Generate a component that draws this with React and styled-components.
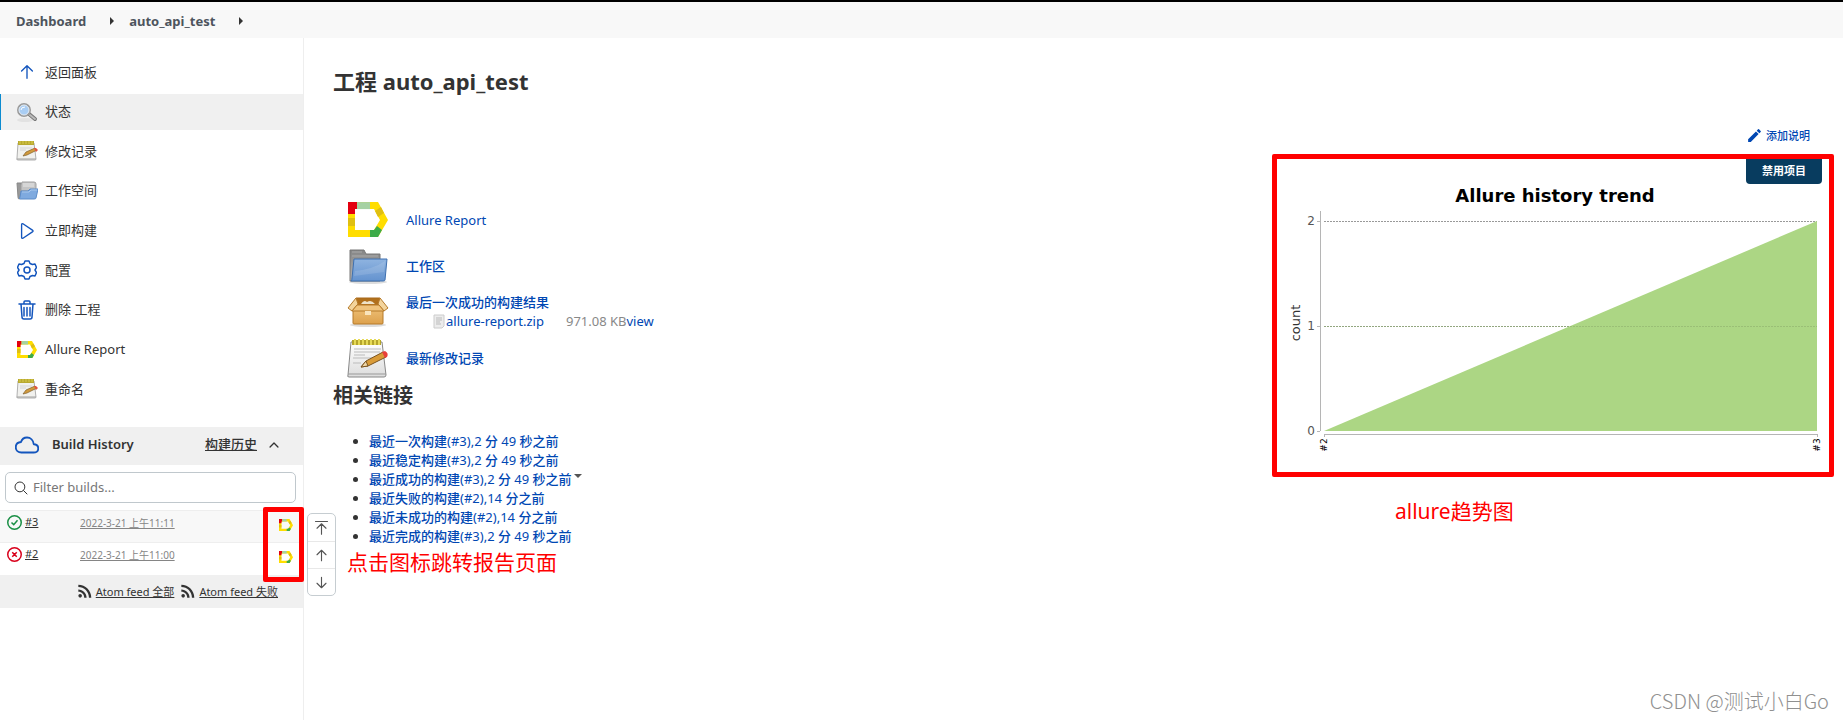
import styled, { createGlobalStyle } from "styled-components"
import {
    IoCloudOutline,
    IoSearchOutline,
    IoChevronUp,
} from "react-icons/io5"
import { MdEdit, MdRssFeed } from "react-icons/md"

const GlobalStyle = createGlobalStyle`
    * {
        box-sizing: border-box;
    }
    body {
        margin: 0;
        background: #fff;
        color: #333;
        font-family: "Noto Sans", "Noto Sans CJK SC", sans-serif;
        font-size: 13px;
        line-height: 19px;
    }
    a {
        color: inherit;
        text-decoration: none;
    }
`

const Page = styled.div`
    position: relative;
    min-height: 100vh;
    display: flex;
    flex-direction: column;
    border-top: 2px solid #000;
`

const Breadcrumbs = styled.nav`
    height: 36px;
    padding: 2px 0 0 16px;
    display: flex;
    align-items: center;
    background: #f8f8f8;
    color: #4d545d;
    font-weight: 700;
`

const Arrow = styled.span`
    margin: 0 15px 0 24px;
    border-left: 4px solid #333;
    border-top: 4px solid transparent;
    border-bottom: 4px solid transparent;
`

const Body = styled.div`
    flex: 1;
    display: flex;
`

const Sidebar = styled.aside`
    position: relative;
    width: 304px;
    flex-shrink: 0;
    border-right: 1px solid #eee;
`

const Tasks = styled.nav`
    min-height: 353px;
    margin: 16px 0 20px;
    display: flex;
    flex-direction: column;
    justify-content: space-between;
`

const Task = styled.a`
    height: 36px;
    padding-left: 14px;
    display: flex;
    align-items: center;
    gap: 6px;
    border-left: 1px solid ${props => props.$active ? "#0b8bd0" : "transparent"};
    background: ${props => props.$active ? "#f0f0f0" : "none"};
`

const TaskIcon = styled.span`
    width: 24px;
    display: flex;
    justify-content: center;
    color: #1355bd;
`

const HistoryHead = styled.div`
    height: 38px;
    padding: 0 22px 3px 15px;
    display: flex;
    align-items: center;
    background: #f0f0f0;
    color: #333;
`

const CloudIcon = styled(IoCloudOutline)`
    color: #1355bd;
    path{
        stroke-width: 40px;
    }
`

const HistoryTitle = styled.h2`
    flex: 1;
    margin: 0 0 0 13px;
    font-size: 13px;
    font-weight: 600;
    line-height: 19px;
`

const Trend = styled.a`
    margin-right: 10px;
    font-weight: 500;
    text-decoration: underline;
`

const Filter = styled.label`
    height: 31px;
    margin: 7px 7px 7px 5px;
    padding: 0 7px;
    display: flex;
    align-items: center;
    gap: 4px;
    border: 1px solid #c0c8cd;
    border-radius: 5px;
`

const FilterInput = styled.input`
    flex: 1;
    min-width: 0;
    padding: 0;
    border: 0;
    outline: 0;
    background: none;
    font: inherit;
    &::placeholder{
        color: #777;
    }
`

const Builds = styled.table`
    width: 100%;
    border-collapse: collapse;
    font-size: 11px;
    line-height: 16px;
`

const BuildRow = styled.tr`
    height: 32px;
    background: ${props => props.$shaded ? "#f8f8f8" : "#fff"};
    border-top: 1px solid #eee;
`

const BuildCell = styled.td`
    width: ${props => props.$width};
    padding: ${props => props.$pad};
    vertical-align: top;
`

const BuildStatus = styled.span`
    display: flex;
    align-items: center;
    gap: 3px;
    color: #333;
    svg{
        color: ${props => props.$ok ? "#1a8f45" : "#d9001b"};
    }
`

const UnderLink = styled.a`
    color: #333;
    text-decoration: underline;
`

const BuildDate = styled(UnderLink)`
    color: #858585;
    font-size: 10px;
`

const Feeds = styled.div`
    height: 33px;
    padding-right: 25px;
    display: flex;
    align-items: center;
    justify-content: flex-end;
    gap: 4px;
    background: #f0f0f0;
    font-size: 11px;
`

const Feed = styled.span`
    display: flex;
    align-items: center;
    gap: 1px;
`

const IconMark = styled.div`
    position: absolute;
    top: 469px;
    right: -1px;
    width: 41px;
    height: 75px;
    border: 5px solid #f00;
    border-radius: 2px;
`

const Pager = styled.div`
    position: absolute;
    top: 475px;
    left: 307px;
    width: 29px;
    border: 1px solid #c6cdd1;
    border-radius: 5px;
    background: #fff;
`

const PagerButton = styled.button`
    width: 100%;
    height: 27px;
    padding: 0;
    display: flex;
    align-items: center;
    justify-content: center;
    border: 0;
    border-top: ${props => props.$first ? "0" : "1px solid #e8e8e8"};
    background: none;
    color: #555;
`

const Main = styled.main`
    flex: 1;
    padding: 28px 9px 0 29px;
    display: grid;
    grid-template-columns: 1fr 562px;
    grid-template-rows: auto 1fr;
`

const Title = styled.h1`
    grid-column: 1 / -1;
    margin: 0;
    font-size: 22px;
    line-height: 30px;
`

const Summary = styled.section`
    padding-top: 101px;
`

const SummaryRow = styled.div`
    height: 46px;
    padding-left: 14px;
    display: grid;
    grid-template-columns: 42px 1fr;
    gap: 17px;
    align-items: center;
`

const SummaryIcon = styled.span`
    display: flex;
    justify-content: center;
`

const Link = styled.a`
    color: #0047b3;
    font-weight: ${props => props.$cjk ? 500 : 400};
`

const Digits = styled.span`
    font-weight: 400;
`

const Artifact = styled.div`
    padding-left: 26px;
    display: flex;
    align-items: center;
`

const FileSize = styled.span`
    margin-left: 22px;
    color: #888;
`

const Heading = styled.h2`
    margin: 0 0 21px;
    font-size: 20px;
    line-height: 30px;
`

const Permalinks = styled.ul`
    margin: 0;
    padding-left: 36px;
`

const Caret = styled.span`
    display: inline-block;
    margin-left: 2px;
    vertical-align: 6px;
    border-top: 4px solid #555;
    border-left: 4px solid transparent;
    border-right: 4px solid transparent;
`

const Note = styled.p`
    margin: 0;
    padding-left: ${props => props.$indent};
    color: #f00;
    font-size: 21px;
    line-height: 32px;
`

const Side = styled.aside`
    padding-top: 30px;
`

const AddNote = styled.a`
    height: 18px;
    margin-bottom: 10px;
    padding-right: 24px;
    display: flex;
    align-items: center;
    justify-content: flex-end;
    gap: 3px;
    color: #0047b3;
    font-size: 11px;
    font-weight: 500;
`

const ChartFrame = styled.div`
    height: 323px;
    margin-bottom: 18px;
    padding-right: 7px;
    border: 5px solid #f00;
    border-radius: 2px;
`

const DisableButton = styled.button`
    width: 76px;
    height: 25px;
    margin-left: auto;
    padding: 0 0 4px;
    display: block;
    border: 0;
    border-radius: 0 0 4px 4px;
    background: #083c5f;
    color: #fff;
    font-family: inherit;
    font-size: 11px;
    font-weight: 700;
`

const Chart = styled.svg`
    display: block;
    font-family: "DejaVu Sans", sans-serif;
`

const Watermark = styled.div`
    position: absolute;
    right: 14px;
    bottom: 5px;
    color: #909090;
    font-family: "Noto Sans CJK SC", sans-serif;
    font-size: 20px;
    font-weight: 300;
    line-height: 28px;
`

const AllureLogo = ({ size }) => (
    <svg width={size} height={size * 0.88} viewBox="0 0 40 35">
        <path fill="#ffdd00" d="M0 0H30L40 18L30 35H0ZM7 7V28H26L32 18L26 7Z" fillRule="evenodd" />
        <path fill="#e3000f" d="M0 0H9V7H7V12H0Z" />
        <path fill="#a5d1a3" d="M9 0H22V7H9Z" />
        <path fill="#dfbf12" d="M0 16H7V24H0ZM33 5L36 11L30 15L27 9Z" />
        <path fill="#3dab49" d="M34 28L30 35H22V28H26L29 24Z" />
    </svg>
)

const FolderIcon = () => (
    <svg width="40" height="35" viewBox="0 0 40 35">
        <defs>
            <linearGradient id="folderBlue" x1="0" y1="0" x2="0" y2="1">
                <stop offset="0" stopColor="#8fb4e0" />
                <stop offset="1" stopColor="#6493cf" />
            </linearGradient>
            <linearGradient id="folderGrey" x1="0" y1="0" x2="0" y2="1">
                <stop offset="0" stopColor="#858585" />
                <stop offset="1" stopColor="#b5b5b5" />
            </linearGradient>
        </defs>
        <ellipse cx="20" cy="33" rx="19" ry="2" fill="#ddd" />
        <path d="M2 1H16L18 5H32V32H2Z" fill="url(#folderGrey)" stroke="#777" />
        <path d="M4 3H14M4 7H30" stroke="#aaa" />
        <path d="M6 10H39L37 31Q37 32 35 32H3Q4 31 4 29Z" fill="url(#folderBlue)" stroke="#3e70b0" />
        <path d="M7 22Q26 20 37 12L36 23L6 27Z" fill="#fff" opacity=".12" />
    </svg>
)

const OpenFolderIcon = () => (
    <svg width="22" height="20" viewBox="0 0 22 20">
        <path d="M1 2H5L6 17L3 18Q2 18 2 16Z" fill="#999" stroke="#888" />
        <path d="M6 1H18Q20 1 20 3V10H5V4Z" fill="#c4c4c4" stroke="#a0a0a0" />
        <path d="M7 3H18M7 5H18" stroke="#e8e8e8" />
        <path d="M5 10H12L14 8H22L20 17Q20 18 18 18H4Q3 18 4 16Z" fill="#7faadf" stroke="#5c8cc8" />
        <path d="M6 11H13L15 9H21" stroke="#a9c7ec" fill="none" />
    </svg>
)

const BoxIcon = () => (
    <svg width="42" height="30" viewBox="0 0 42 30">
        <defs>
            <linearGradient id="boxFront" x1="0" y1="0" x2="0" y2="1">
                <stop offset="0" stopColor="#eec078" />
                <stop offset="1" stopColor="#dda14c" />
            </linearGradient>
        </defs>
        <ellipse cx="21" cy="28" rx="18" ry="2" fill="#ddd" />
        <path d="M9 1H33L36 12H6Z" fill="#b1701c" stroke="#a8681a" />
        <path d="M14 7Q17 2 20 5Q24 2 28 7Z" fill="#eee2c8" />
        <path d="M6 10H36V26Q36 27 35 27H7Q6 27 6 26Z" fill="url(#boxFront)" stroke="#b67a2a" />
        <path d="M9 1L1 11L5 14L11 7ZM33 1L41 11L37 14L31 7Z" fill="#f3d49c" stroke="#b67a2a" />
        <path d="M10 8H32L37 14H5Z" fill="#f0c37c" stroke="#b67a2a" />
        <path d="M18 14H24V18H18Z" fill="#f9e4bc" />
    </svg>
)

const NotepadIcon = () => (
    <svg width="42" height="40" viewBox="0 0 42 40">
        <defs>
            <linearGradient id="notePaper" x1="0" y1="0" x2="0" y2="1">
                <stop offset="0" stopColor="#fff" />
                <stop offset="1" stopColor="#dcdcdc" />
            </linearGradient>
        </defs>
        <path d="M4 4H35L39 37Q39 39 37 39H2Q0 39 1 37Z" fill="url(#notePaper)" stroke="#888" />
        <path d="M1 36H39" stroke="#999" />
        <path d="M5 2H34V7H5Z" fill="#b5a52c" />
        <path d="M8 1V7M12 1V7M16 1V7M20 1V7M24 1V7M28 1V7M32 1V7" stroke="#e6da56" strokeWidth="2" />
        <path d="M7 11H34M7 14H33M7 17H18M6 20H26M6 25H14" stroke="#bbb" />
        <path d="M14 29L19 23L36 14L39 19L21 28Z" fill="#d99b38" stroke="#7b5420" />
        <path d="M14 29L19 23L21 28Z" fill="#f0d8a8" stroke="#7b5420" />
        <path d="M35 14L38 13Q42 15 40 19L38 20Z" fill="#e8403a" />
    </svg>
)

const SmallNotepadIcon = () => (
    <svg width="22" height="20" viewBox="0 0 22 20">
        <path d="M2 2H18L20 18Q20 19 19 19H2Q0 19 1 17Z" fill="#f1f1ee" stroke="#b0b0b0" />
        <path d="M1 18H20" stroke="#a0a0a0" />
        <path d="M2 0H18V4H2Z" fill="#b8a92f" />
        <path d="M4 0V3M7 0V3M10 0V3M13 0V3M16 0V3" stroke="#d8ca4e" />
        <path d="M4 7H16M4 9H10" stroke="#d5d5d5" />
        <path d="M7 15L10 11L19 7L21 9L11 14Z" fill="#d19a3c" stroke="#80602c" strokeWidth=".7" />
        <path d="M18 7L20 7L22 9L20 11Z" fill="#e2533f" />
    </svg>
)

const SearchIcon = () => (
    <svg width="22" height="20" viewBox="0 0 22 20">
        <ellipse cx="9" cy="18" rx="8" ry="2" fill="#e2e2e2" />
        <path d="M13 12L19 17" stroke="#777" strokeWidth="4" strokeLinecap="round" />
        <path d="M14 13L19 17" stroke="#bbb" strokeWidth="2" strokeLinecap="round" />
        <circle cx="8" cy="8" r="6" fill="#a9cdf3" stroke="#9b9b9b" strokeWidth="2" />
        <circle cx="8" cy="8" r="5" fill="none" stroke="#e5eef7" />
        <path d="M5 8Q5 5 9 5" stroke="#fff" fill="none" />
    </svg>
)

const FileIcon = () => (
    <svg width="14" height="15" viewBox="0 0 14 15">
        <path d="M2 1H12V12L10 14H2Z" fill="#ececec" stroke="#ccc" />
        <path d="M4 4H10M4 6H10M4 8H8M4 10H9" stroke="#bbb" />
    </svg>
)

const LineIcon = ({ size = 20, d }) => (
    <svg
        width={size}
        height={size}
        viewBox="0 0 20 20"
        fill="none"
        stroke="currentColor"
        strokeWidth="1.5"
        strokeLinecap="round"
        strokeLinejoin="round"
    >
        <path d={d} />
    </svg>
)

const paths = {
    up: "M10 17V4M4 9L10 3L16 9",
    down: "M10 3V16M4 11L10 17L16 11",
    top: "M2 2H18M10 19V6M4 11L10 5L16 11",
    play: "M4 3V17Q4 18.500 5.500 18L16 11Q17.500 10 16 9L5.500 2Q4 1.500 4 3Z",
    gear: "M8 1H12L13 3.500L15.500 4.500L18 4L19.500 7.500L18 10L19.500 12.500L18 16L15.500 15.500L13 16.500L12 19H8L7 16.500L4.500 15.500L2 16L.5 12.500L2 10L.5 7.500L2 4L4.500 4.500L7 3.500ZM13 10A3 3 0 1 1 7 10A3 3 0 1 1 13 10Z",
    trash: "M2 4H18M4 4L5 17Q5 19 7 19H13Q15 19 15 17L16 4M7 4V2Q7 1 8 1H12Q13 1 13 2V4M7 7.500V16M10 7.500V16M13 7.500V16",
    success: "M19 10A9 9 0 1 1 1 10A9 9 0 1 1 19 10ZM6 10L9 13L14 7",
    failure: "M19 10A9 9 0 1 1 1 10A9 9 0 1 1 19 10ZM7 7L13 13M13 7L7 13",
}

const StatusIcon = ({ ok }) => (
    <svg width="15" height="15" viewBox="0 0 20 20" fill="none" stroke="currentColor" strokeWidth="2">
        <path d={ok ? paths.success : paths.failure} />
    </svg>
)

const tasks = [
    { name: "返回面板", icon: <LineIcon size={18} d={paths.up} /> },
    { name: "状态", icon: <SearchIcon />, active: true },
    { name: "修改记录", icon: <SmallNotepadIcon /> },
    { name: "工作空间", icon: <OpenFolderIcon /> },
    { name: "立即构建", icon: <LineIcon size={18} d={paths.play} /> },
    { name: "配置", icon: <LineIcon d={paths.gear} /> },
    { name: "删除 工程", icon: <LineIcon d={paths.trash} /> },
    { name: "Allure Report", icon: <AllureLogo size={20} /> },
    { name: "重命名", icon: <SmallNotepadIcon /> },
]

const builds = [
    { id: "#3", date: "2022-3-21 上午11:11", ok: true },
    { id: "#2", date: "2022-3-21 上午11:00", ok: false },
]

const permalinks = [
    { name: "最近一次构建", build: "(#3),2", ago: " 分 ", rest: "49", end: " 秒之前" },
    { name: "最近稳定构建", build: "(#3),2", ago: " 分 ", rest: "49", end: " 秒之前" },
    { name: "最近成功的构建", build: "(#3),2", ago: " 分 ", rest: "49", end: " 秒之前", menu: true },
    { name: "最近失败的构建", build: "(#2),14", ago: " 分之前" },
    { name: "最近未成功的构建", build: "(#2),14", ago: " 分之前" },
    { name: "最近完成的构建", build: "(#3),2", ago: " 分 ", rest: "49", end: " 秒之前" },
]

const TrendChart = () => (
    <Chart width="545" height="280" viewBox="0 0 545 280">
        <text x="278" y="18" textAnchor="middle" fontSize="18" fontWeight="700" fill="#000">Allure history trend</text>
        <path d="M47 37H540M47 142H540" stroke="#999" strokeDasharray="2 1" shapeRendering="crispEdges" />
        <path d="M47 247L540 37V247Z" fill="#acd684" />
        <path d="M47 142H540" stroke="#8fb06e" strokeDasharray="2 1" opacity=".6" shapeRendering="crispEdges" />
        <path d="M43 27V247M40 37H43M40 142H43M40 247H43M47 250H540M47 250V253M540 250V253" stroke="#b5b5b5" fill="none" shapeRendering="crispEdges" />
        <g fontSize="12" fill="#555" textAnchor="end">
            <text x="38" y="41">2</text>
            <text x="38" y="146">1</text>
            <text x="38" y="251">0</text>
        </g>
        <text transform="translate(23 139) rotate(-90)" textAnchor="middle" fontSize="13" fill="#333">count</text>
        <g fontSize="9" fill="#000" textAnchor="middle">
            <text transform="translate(50 261) rotate(-90)">#2</text>
            <text transform="translate(543 261) rotate(-90)">#3</text>
        </g>
    </Chart>
)

const App = () => {
    return (
        <Page>
            <GlobalStyle />
            <Breadcrumbs>
                <a href="#dashboard">Dashboard</a>
                <Arrow />
                <a href="#job">auto_api_test</a>
                <Arrow />
            </Breadcrumbs>
            <Body>
                <Sidebar>
                    <Tasks>
                        {tasks.map(task => (
                            <Task key={task.name} href="#task" $active={task.active}>
                                <TaskIcon>{task.icon}</TaskIcon>
                                {task.name}
                            </Task>
                        ))}
                    </Tasks>
                    <HistoryHead>
                        <CloudIcon size={24} />
                        <HistoryTitle>Build History</HistoryTitle>
                        <Trend href="#trend">构建历史</Trend>
                        <IoChevronUp size={14} />
                    </HistoryHead>
                    <Filter>
                        <IoSearchOutline size={16} />
                        <FilterInput type="text" aria-label="Filter builds" placeholder="Filter builds..." />
                    </Filter>
                    <Builds>
                        <tbody>
                            {builds.map(build => (
                                <BuildRow key={build.id} $shaded={build.ok}>
                                    <BuildCell $width="80px" $pad="3px 0 0 7px">
                                        <BuildStatus $ok={build.ok}>
                                            <StatusIcon ok={build.ok} />
                                            <UnderLink href="#build">{build.id}</UnderLink>
                                        </BuildStatus>
                                    </BuildCell>
                                    <BuildCell $width="auto" $pad="4px 0 0">
                                        <BuildDate href="#build">{build.date}</BuildDate>
                                    </BuildCell>
                                    <BuildCell $width="24px" $pad="8px 0 0">
                                        <AllureLogo size={14} />
                                    </BuildCell>
                                </BuildRow>
                            ))}
                        </tbody>
                    </Builds>
                    <Feeds>
                        <Feed>
                            <MdRssFeed size={20} />
                            <UnderLink href="#all">Atom feed 全部</UnderLink>
                        </Feed>
                        <Feed>
                            <MdRssFeed size={20} />
                            <UnderLink href="#failed">Atom feed 失败</UnderLink>
                        </Feed>
                    </Feeds>
                    <IconMark />
                    <Pager>
                        <PagerButton $first aria-label="Newest builds"><LineIcon size={15} d={paths.top} /></PagerButton>
                        <PagerButton aria-label="Newer builds"><LineIcon size={15} d={paths.up} /></PagerButton>
                        <PagerButton aria-label="Older builds"><LineIcon size={15} d={paths.down} /></PagerButton>
                    </Pager>
                </Sidebar>
                <Main>
                    <Title>工程 auto_api_test</Title>
                    <Summary>
                        <SummaryRow>
                            <SummaryIcon><AllureLogo size={40} /></SummaryIcon>
                            <Link href="#allure">Allure Report</Link>
                        </SummaryRow>
                        <SummaryRow>
                            <SummaryIcon><FolderIcon /></SummaryIcon>
                            <Link href="#ws" $cjk>工作区</Link>
                        </SummaryRow>
                        <SummaryRow>
                            <SummaryIcon><BoxIcon /></SummaryIcon>
                            <div>
                                <Link href="#artifacts" $cjk>最后一次成功的构建结果</Link>
                                <Artifact>
                                    <FileIcon />
                                    <Link href="#zip">allure-report.zip</Link>
                                    <FileSize>971.08 KB</FileSize>
                                    <Link href="#view">view</Link>
                                </Artifact>
                            </div>
                        </SummaryRow>
                        <SummaryRow>
                            <SummaryIcon><NotepadIcon /></SummaryIcon>
                            <Link href="#changes" $cjk>最新修改记录</Link>
                        </SummaryRow>
                        <Heading>相关链接</Heading>
                        <Permalinks>
                            {permalinks.map(item => (
                                <li key={item.name}>
                                    <Link href="#permalink" $cjk>
                                        {item.name}<Digits>{item.build}</Digits>{item.ago}<Digits>{item.rest}</Digits>{item.end}
                                    </Link>
                                    {item.menu && <Caret />}
                                </li>
                            ))}
                        </Permalinks>
                        <Note $indent="14px">点击图标跳转报告页面</Note>
                    </Summary>
                    <Side>
                        <AddNote href="#description">
                            <MdEdit size={17} />
                            添加说明
                        </AddNote>
                        <ChartFrame>
                            <DisableButton>禁用项目</DisableButton>
                            <TrendChart />
                        </ChartFrame>
                        <Note $indent="123px">allure趋势图</Note>
                    </Side>
                </Main>
            </Body>
            <Watermark>CSDN @测试小白Go</Watermark>
        </Page>
    )
}

export default App
